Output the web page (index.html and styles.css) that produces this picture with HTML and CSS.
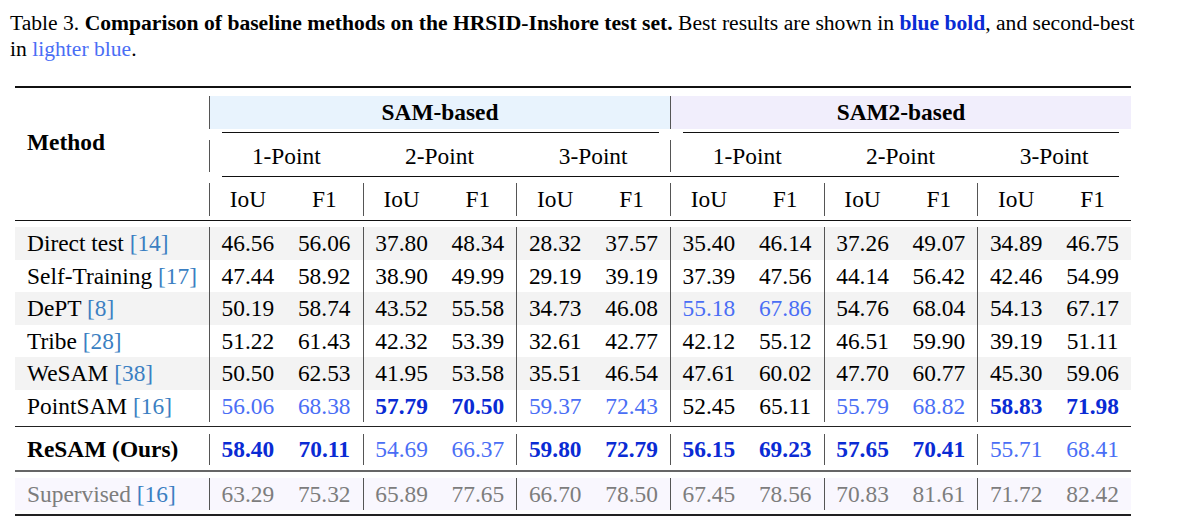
FILE: index.html
```html
<!DOCTYPE html>
<html>
<head>
<meta charset="utf-8">
<link rel="stylesheet" href="styles.css">
</head>
<body>
<div class="page">
<p class="cap">Table 3. <b>Comparison of baseline methods on the HRSID-Inshore test set.</b> Best results are shown in <b class="best">blue bold</b>, and second-best in <span class="second">lighter blue</span>.</p>
<table class="tbl">
<colgroup><col class="c-method"><col><col><col><col><col><col><col><col><col><col><col><col></colgroup>
<tr class="sp sp-top"><td colspan="13"><div class="rule r-top"></div></td></tr>
<tr class="h1">
<th rowspan="5" class="method">Method</th>
<th colspan="6" class="band sam vl">SAM-based</th>
<th colspan="6" class="band sam2 vl">SAM2-based</th>
</tr>
<tr class="sp sp-c1"><td colspan="6"><div class="cmid c-left"></div></td><td colspan="6"><div class="cmid c-right"></div></td></tr>
<tr class="h2">
<th colspan="2" class="vl">1-Point</th><th colspan="2">2-Point</th><th colspan="2">3-Point</th>
<th colspan="2" class="vl">1-Point</th><th colspan="2">2-Point</th><th colspan="2">3-Point</th>
</tr>
<tr class="sp sp-c2"><td colspan="12"><div class="cmid c-full"></div></td></tr>
<tr class="h3">
<th class="vl">IoU</th><th>F1</th><th class="vl">IoU</th><th>F1</th><th class="vl">IoU</th><th>F1</th>
<th class="vl">IoU</th><th>F1</th><th class="vl">IoU</th><th>F1</th><th class="vl">IoU</th><th>F1</th>
</tr>
<tr class="sp sp-mid"><td colspan="13"><div class="rule r-mid"></div></td></tr>

<tr class="dr shade"><td>Direct test <span class="cite">[14]</span></td><td>46.56</td><td>56.06</td><td>37.80</td><td>48.34</td><td>28.32</td><td>37.57</td><td>35.40</td><td>46.14</td><td>37.26</td><td>49.07</td><td>34.89</td><td>46.75</td></tr>
<tr class="dr"><td>Self-Training <span class="cite">[17]</span></td><td>47.44</td><td>58.92</td><td>38.90</td><td>49.99</td><td>29.19</td><td>39.19</td><td>37.39</td><td>47.56</td><td>44.14</td><td>56.42</td><td>42.46</td><td>54.99</td></tr>
<tr class="dr shade"><td>DePT <span class="cite">[8]</span></td><td>50.19</td><td>58.74</td><td>43.52</td><td>55.58</td><td>34.73</td><td>46.08</td><td class="second">55.18</td><td class="second">67.86</td><td>54.76</td><td>68.04</td><td>54.13</td><td>67.17</td></tr>
<tr class="dr"><td>Tribe <span class="cite">[28]</span></td><td>51.22</td><td>61.43</td><td>42.32</td><td>53.39</td><td>32.61</td><td>42.77</td><td>42.12</td><td>55.12</td><td>46.51</td><td>59.90</td><td>39.19</td><td>51.11</td></tr>
<tr class="dr shade"><td>WeSAM <span class="cite">[38]</span></td><td>50.50</td><td>62.53</td><td>41.95</td><td>53.58</td><td>35.51</td><td>46.54</td><td>47.61</td><td>60.02</td><td>47.70</td><td>60.77</td><td>45.30</td><td>59.06</td></tr>
<tr class="dr"><td>PointSAM <span class="cite">[16]</span></td><td class="second">56.06</td><td class="second">68.38</td><td class="best">57.79</td><td class="best">70.50</td><td class="second">59.37</td><td class="second">72.43</td><td>52.45</td><td>65.11</td><td class="second">55.79</td><td class="second">68.82</td><td class="best">58.83</td><td class="best">71.98</td></tr>

<tr class="sp sp-r1"><td colspan="13"><div class="rule r-thin"></div></td></tr>
<tr class="dr ours"><td><b>ReSAM (Ours)</b></td><td class="best">58.40</td><td class="best">70.11</td><td class="second">54.69</td><td class="second">66.37</td><td class="best">59.80</td><td class="best">72.79</td><td class="best">56.15</td><td class="best">69.23</td><td class="best">57.65</td><td class="best">70.41</td><td class="second">55.71</td><td class="second">68.41</td></tr>
<tr class="sp sp-r2"><td colspan="13"><div class="rule r-gray"></div></td></tr>
<tr class="dr sup"><td>Supervised <span class="cite">[16]</span></td><td>63.29</td><td>75.32</td><td>65.89</td><td>77.65</td><td>66.70</td><td>78.50</td><td>67.45</td><td>78.56</td><td>70.83</td><td>81.61</td><td>71.72</td><td>82.42</td></tr>
<tr class="sp sp-bot"><td colspan="13"><div class="rule r-bot"></div></td></tr>
</table>
</div>
</body>
</html>
```
FILE: styles.css
```css
html, body {
  margin: 0;
  padding: 0;
  background: #ffffff;
}
body {
  font-family: "Liberation Serif", "Times New Roman", serif;
  color: #000;
}
.page {
  padding: 10px 0 0 10px;
}
.cap {
  margin: 0;
  width: 1140px;
  font-size: 21.6px;
  line-height: 26px;
}
.best {
  color: #0a2bd4;
  font-weight: bold;
}
.second {
  color: #4a6ef5;
}
.cite {
  color: #3b7fc2;
}
.tbl {
  border-collapse: separate;
  border-spacing: 0;
  table-layout: fixed;
  width: 1116px;
  margin: 24px 0 0 5px;
  font-size: 23.4px;
  line-height: 23px;
}
.c-method {
  width: 194px;
}
.tbl th, .tbl td {
  padding: 0;
  text-align: center;
  vertical-align: middle;
  font-weight: normal;
  white-space: nowrap;
}
.tbl .best {
  font-weight: bold;
}
.sp td {
  vertical-align: top;
  line-height: 0;
  font-size: 0;
}
.sp-top td { height: 10px; }
.sp-c1 td { height: 11px; padding-top: 3px; box-sizing: border-box; }
.sp-c2 td { height: 11px; padding-top: 4px; box-sizing: border-box; }
.sp-mid td { height: 11px; padding-top: 4px; box-sizing: border-box; }
.sp-r1 td { height: 12px; padding-top: 4px; box-sizing: border-box; }
.sp-r2 td { height: 13px; padding-top: 5px; box-sizing: border-box; }
.sp-bot td { height: 7px; padding-top: 4px; box-sizing: border-box; }

.rule { width: 100%; }
.r-top { border-top: 2px solid #111; }
.r-mid { border-top: 1px solid #111; }
.r-thin { border-top: 1.5px solid #222; }
.r-gray { border-top: 2px solid #666; }
.r-bot { border-top: 2px solid #222; }

.cmid { border-top: 1px solid #111; }
.c-left { margin: 0 11px 0 13px; }
.c-right { margin: 0 12px 0 13px; }
.c-full { margin: 0 12px 0 13px; }

.tbl .method {
  vertical-align: top;
  text-align: left;
  padding-left: 12px;
  padding-top: 35px;
  font-weight: bold;
}
.tbl .band {
  font-weight: bold;
  height: 33px;
}
.band.sam { background: #e8f3fd; }
.band.sam2 { background: #f1eefc; }
.vl { border-left: 1px solid #555; }
.h2 th { height: 32px; }
.h3 th { height: 33px; }

.dr td { height: 32px; }
.dr.shade td { height: 33px; background: #f3f3f3; }
.dr td:first-child {
  text-align: left;
  padding-left: 12px;
}
.dr td:nth-child(2n) {
  border-left: 1px solid #555;
}
.dr.ours td { height: 31px; }
.dr.sup td {
  background: #f9f7fe;
  color: #7d7d7d;
}
.dr.sup .cite { color: #3b7fc2; }
```
